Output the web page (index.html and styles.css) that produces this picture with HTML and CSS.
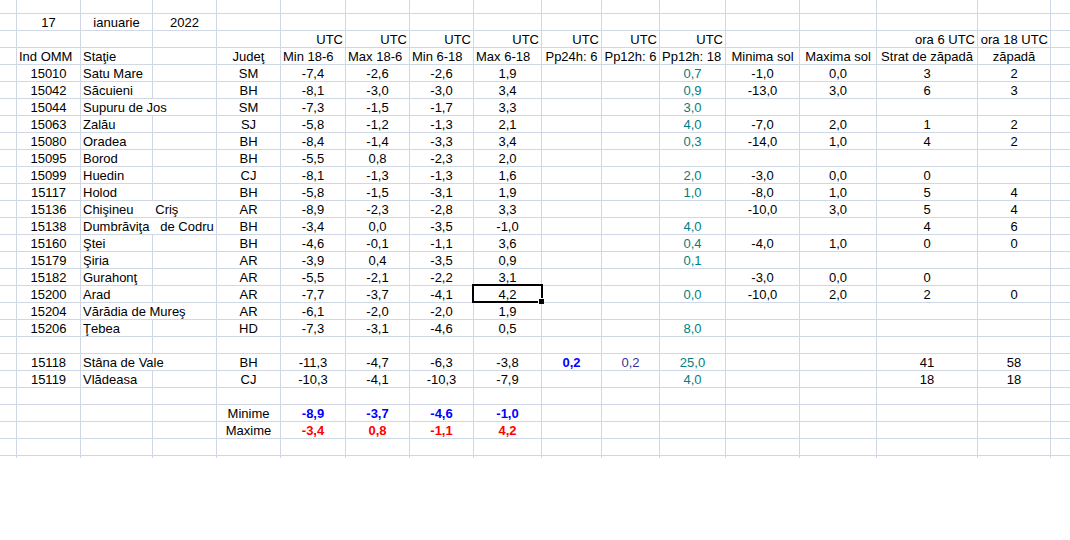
FILE: index.html
```html
<!DOCTYPE html>
<html lang="ro">
<head>
<meta charset="utf-8">
<title>Temperaturi 17 ianuarie 2022</title>
<link rel="stylesheet" href="styles.css">
</head>
<body>
<table class="sheet">
<colgroup>
<col class="c17"><col class="c64"><col class="c72"><col class="c64"><col class="c64"><col class="c65"><col class="c64"><col class="c64"><col class="c68"><col class="c60"><col class="c58"><col class="c66"><col class="c74"><col class="c77"><col class="c101"><col class="c73"><col class="c19">
</colgroup>
<tbody>
<tr class="top"><td></td><td></td><td></td><td></td><td></td><td></td><td></td><td></td><td></td><td></td><td></td><td></td><td></td><td></td><td></td><td></td><td></td></tr>
<tr><td></td><td>17</td><td>ianuarie</td><td>2022</td><td></td><td></td><td></td><td></td><td></td><td></td><td></td><td></td><td></td><td></td><td></td><td></td><td></td></tr>
<tr><td></td><td></td><td></td><td></td><td></td><td class="r">UTC</td><td class="r">UTC</td><td class="r">UTC</td><td class="r">UTC</td><td class="r">UTC</td><td class="r">UTC</td><td class="r">UTC</td><td></td><td></td><td class="r">ora 6 UTC</td><td class="r">ora 18 UTC</td><td></td></tr>
<tr><td></td><td class="l">Ind OMM</td><td class="l">Staţie</td><td></td><td>Judeţ</td><td class="l">Min 18-6</td><td class="l">Max 18-6</td><td class="l">Min 6-18</td><td class="l">Max 6-18</td><td>Pp24h: 6</td><td>Pp12h: 6</td><td class="l">Pp12h: 18</td><td>Minima sol</td><td>Maxima sol</td><td>Strat de zăpadă</td><td>zăpadă</td><td></td></tr>
<tr><td></td><td>15010</td><td class="l">Satu Mare</td><td></td><td>SM</td><td>-7,4</td><td>-2,6</td><td>-2,6</td><td>1,9</td><td></td><td></td><td class="p">0,7</td><td>-1,0</td><td>0,0</td><td>3</td><td>2</td><td></td></tr>
<tr><td></td><td>15042</td><td class="l">Săcuieni</td><td></td><td>BH</td><td>-8,1</td><td>-3,0</td><td>-3,0</td><td>3,4</td><td></td><td></td><td class="p">0,9</td><td>-13,0</td><td>3,0</td><td>6</td><td>3</td><td></td></tr>
<tr><td></td><td>15044</td><td class="l" colspan="2">Supuru de Jos</td><td>SM</td><td>-7,3</td><td>-1,5</td><td>-1,7</td><td>3,3</td><td></td><td></td><td class="p">3,0</td><td></td><td></td><td></td><td></td><td></td></tr>
<tr><td></td><td>15063</td><td class="l">Zalău</td><td></td><td>SJ</td><td>-5,8</td><td>-1,2</td><td>-1,3</td><td>2,1</td><td></td><td></td><td class="p">4,0</td><td>-7,0</td><td>2,0</td><td>1</td><td>2</td><td></td></tr>
<tr><td></td><td>15080</td><td class="l">Oradea</td><td></td><td>BH</td><td>-8,4</td><td>-1,4</td><td>-3,3</td><td>3,4</td><td></td><td></td><td class="p">0,3</td><td>-14,0</td><td>1,0</td><td>4</td><td>2</td><td></td></tr>
<tr><td></td><td>15095</td><td class="l">Borod</td><td></td><td>BH</td><td>-5,5</td><td>0,8</td><td>-2,3</td><td>2,0</td><td></td><td></td><td></td><td></td><td></td><td></td><td></td><td></td></tr>
<tr><td></td><td>15099</td><td class="l">Huedin</td><td></td><td>CJ</td><td>-8,1</td><td>-1,3</td><td>-1,3</td><td>1,6</td><td></td><td></td><td class="p">2,0</td><td>-3,0</td><td>0,0</td><td>0</td><td></td><td></td></tr>
<tr><td></td><td>15117</td><td class="l">Holod</td><td></td><td>BH</td><td>-5,8</td><td>-1,5</td><td>-3,1</td><td>1,9</td><td></td><td></td><td class="p">1,0</td><td>-8,0</td><td>1,0</td><td>5</td><td>4</td><td></td></tr>
<tr><td></td><td>15136</td><td class="l" colspan="2">Chişineu      Criş</td><td>AR</td><td>-8,9</td><td>-2,3</td><td>-2,8</td><td>3,3</td><td></td><td></td><td></td><td>-10,0</td><td>3,0</td><td>5</td><td>4</td><td></td></tr>
<tr><td></td><td>15138</td><td class="l" colspan="2">Dumbrăviţa   de Codru</td><td>BH</td><td>-3,4</td><td>0,0</td><td>-3,5</td><td>-1,0</td><td></td><td></td><td class="p">4,0</td><td></td><td></td><td>4</td><td>6</td><td></td></tr>
<tr><td></td><td>15160</td><td class="l">Ştei</td><td></td><td>BH</td><td>-4,6</td><td>-0,1</td><td>-1,1</td><td>3,6</td><td></td><td></td><td class="p">0,4</td><td>-4,0</td><td>1,0</td><td>0</td><td>0</td><td></td></tr>
<tr><td></td><td>15179</td><td class="l">Şiria</td><td></td><td>AR</td><td>-3,9</td><td>0,4</td><td>-3,5</td><td>0,9</td><td></td><td></td><td class="p">0,1</td><td></td><td></td><td></td><td></td><td></td></tr>
<tr><td></td><td>15182</td><td class="l">Gurahonţ</td><td></td><td>AR</td><td>-5,5</td><td>-2,1</td><td>-2,2</td><td>3,1</td><td></td><td></td><td></td><td>-3,0</td><td>0,0</td><td>0</td><td></td><td></td></tr>
<tr><td></td><td>15200</td><td class="l">Arad</td><td></td><td>AR</td><td>-7,7</td><td>-3,7</td><td>-4,1</td><td class="selected">4,2<span class="cursor"></span></td><td></td><td></td><td class="p">0,0</td><td>-10,0</td><td>2,0</td><td>2</td><td>0</td><td></td></tr>
<tr><td></td><td>15204</td><td class="l" colspan="2">Vărădia de Mureş</td><td>AR</td><td>-6,1</td><td>-2,0</td><td>-2,0</td><td>1,9</td><td></td><td></td><td></td><td></td><td></td><td></td><td></td><td></td></tr>
<tr><td></td><td>15206</td><td class="l">Ţebea</td><td></td><td>HD</td><td>-7,3</td><td>-3,1</td><td>-4,6</td><td>0,5</td><td></td><td></td><td class="p">8,0</td><td></td><td></td><td></td><td></td><td></td></tr>
<tr><td></td><td></td><td></td><td></td><td></td><td></td><td></td><td></td><td></td><td></td><td></td><td></td><td></td><td></td><td></td><td></td><td></td></tr>
<tr><td></td><td>15118</td><td class="l" colspan="2">Stâna de Vale</td><td>BH</td><td>-11,3</td><td>-4,7</td><td>-6,3</td><td>-3,8</td><td class="lo">0,2</td><td class="i">0,2</td><td class="p">25,0</td><td></td><td></td><td>41</td><td>58</td><td></td></tr>
<tr><td></td><td>15119</td><td class="l">Vlădeasa</td><td></td><td>CJ</td><td>-10,3</td><td>-4,1</td><td>-10,3</td><td>-7,9</td><td></td><td></td><td class="p">4,0</td><td></td><td></td><td>18</td><td>18</td><td></td></tr>
<tr><td></td><td></td><td></td><td></td><td></td><td></td><td></td><td></td><td></td><td></td><td></td><td></td><td></td><td></td><td></td><td></td><td></td></tr>
<tr><td></td><td></td><td></td><td></td><td>Minime</td><td class="lo">-8,9</td><td class="lo">-3,7</td><td class="lo">-4,6</td><td class="lo">-1,0</td><td></td><td></td><td></td><td></td><td></td><td></td><td></td><td></td></tr>
<tr><td></td><td></td><td></td><td></td><td>Maxime</td><td class="hi">-3,4</td><td class="hi">0,8</td><td class="hi">-1,1</td><td class="hi">4,2</td><td></td><td></td><td></td><td></td><td></td><td></td><td></td><td></td></tr>
<tr><td></td><td></td><td></td><td></td><td></td><td></td><td></td><td></td><td></td><td></td><td></td><td></td><td></td><td></td><td></td><td></td><td></td></tr>
<tr class="tail"><td></td><td></td><td></td><td></td><td></td><td></td><td></td><td></td><td></td><td></td><td></td><td></td><td></td><td></td><td></td><td></td><td></td></tr>
</tbody>
</table>
</body>
</html>
```

FILE: styles.css
```css
html, body {
  margin: 0;
  padding: 0;
  background: #fff;
  overflow: hidden;
}

.sheet {
  table-layout: fixed;
  border-collapse: separate;
  border-spacing: 0;
  width: 1070px;
  font-family: "Liberation Sans", Arial, sans-serif;
  font-size: 13px;
  color: #000;
}

.c17 { width: 17px; }
.c19 { width: 19px; }
.c58 { width: 58px; }
.c60 { width: 60px; }
.c64 { width: 64px; }
.c65 { width: 65px; }
.c66 { width: 66px; }
.c68 { width: 68px; }
.c72 { width: 72px; }
.c73 { width: 73px; }
.c74 { width: 74px; }
.c77 { width: 77px; }
.c101 { width: 101px; }

.sheet tr {
  height: 17px;
}

.sheet td {
  box-sizing: border-box;
  height: 17px;
  padding: 2px 0 0;
  line-height: 14px;
  text-align: center;
  vertical-align: top;
  white-space: pre;
  border-right: 1px solid #d0d7e5;
  border-bottom: 1px solid #d0d7e5;
}

.sheet .top,
.sheet .top td {
  height: 14px;
}

.sheet .tail,
.sheet .tail td {
  height: 2px;
  padding: 0;
  line-height: 0;
  border-bottom: 0;
}

.sheet td:last-child {
  border-right: 0;
}

.sheet .l {
  text-align: left;
  padding-left: 2px;
}

.sheet .r {
  text-align: right;
  padding-right: 2px;
}

.p { color: #008080; }
.i { color: #333399; }
.lo { color: #0000ff; font-weight: bold; }
.hi { color: #ff0000; font-weight: bold; }

.sheet .selected {
  position: relative;
}

.cursor {
  position: absolute;
  top: -2px;
  left: -2px;
  right: -2px;
  bottom: -1px;
  border: 2px solid #000;
}

.cursor::after {
  content: "";
  position: absolute;
  right: -3px;
  bottom: -3px;
  width: 5px;
  height: 5px;
  background: #000;
  border-top: 1px solid #fff;
  border-left: 1px solid #fff;
}
```
